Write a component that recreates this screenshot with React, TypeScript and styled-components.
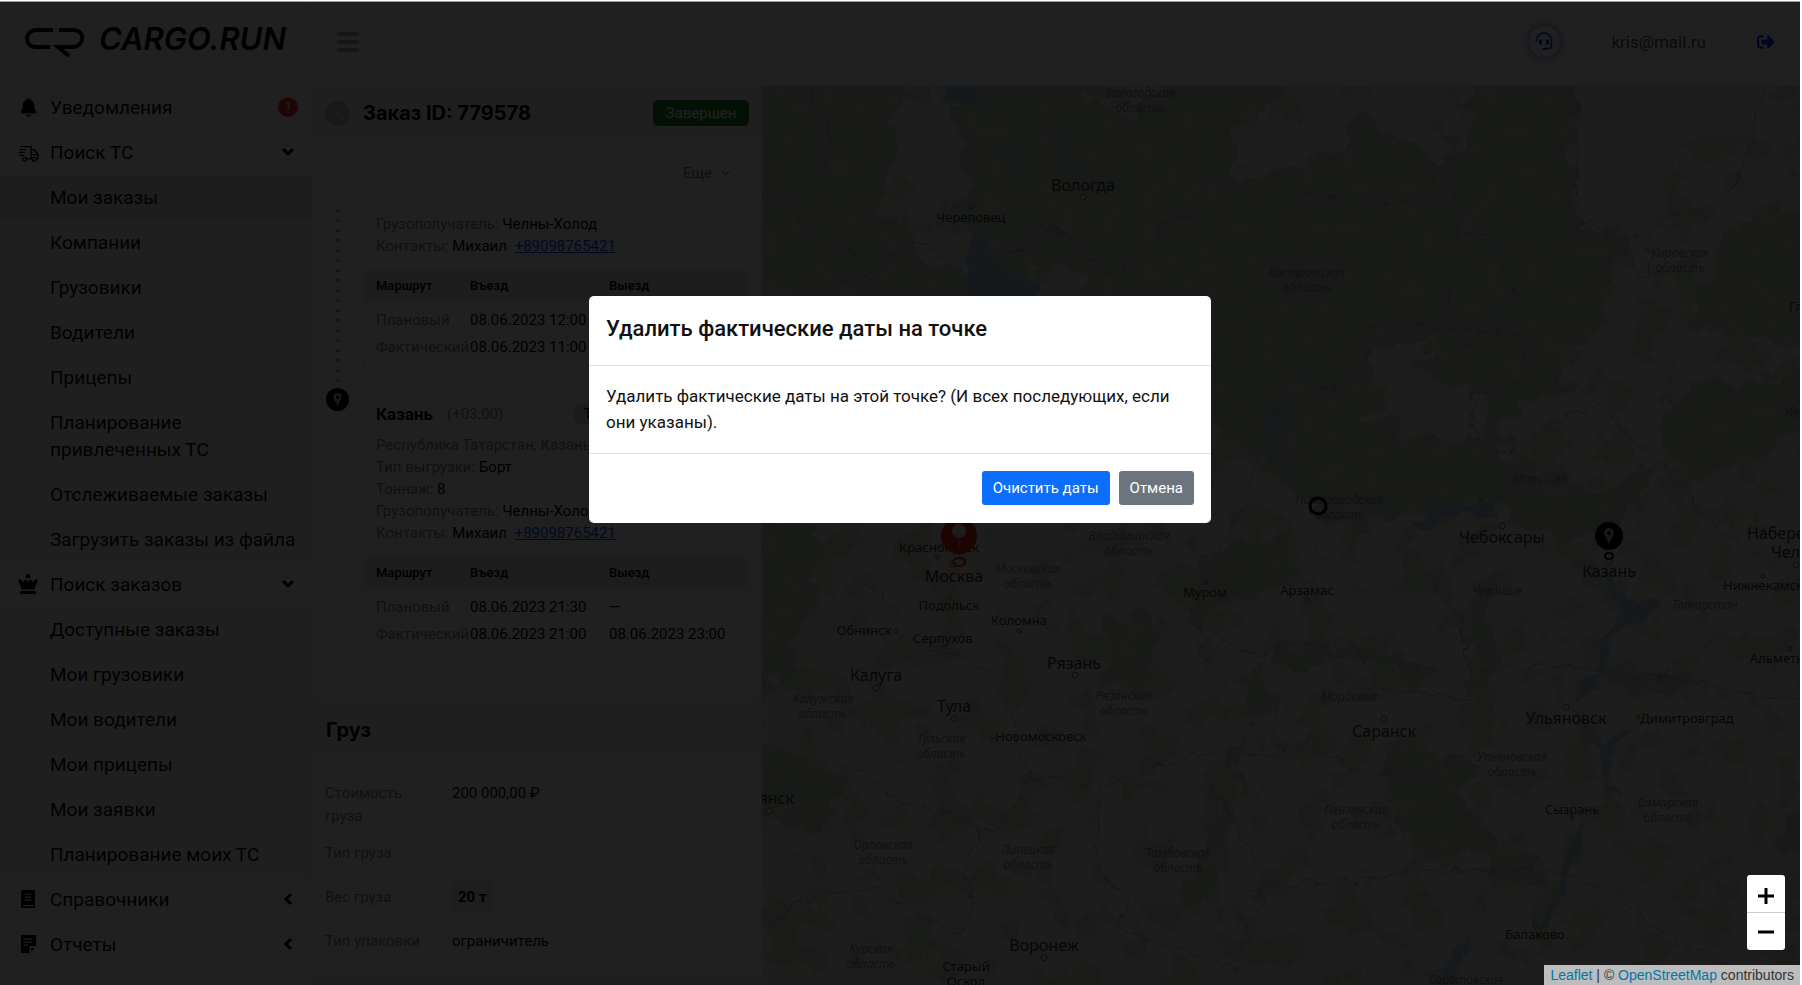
import React from "react";
import styled, { createGlobalStyle } from "styled-components";
import { IoNotifications } from "react-icons/io5";
import { FaSignOutAlt } from "react-icons/fa";

const GlobalStyle = createGlobalStyle`
  *, *::before, *::after { box-sizing: border-box; }
  body {
    margin: 0;
    background: #fff;
    color: #000;
    font-family: Roboto, "Liberation Sans", sans-serif;
    font-size: 18px;
  }
  h1, h2, h3, p, ul, dl, dd { margin: 0; padding: 0; }
  ul { list-style: none; }
  button { font-family: inherit; cursor: pointer; }
`;

/* ---------- Shell ---------- */

const Shell = styled.div`
  display: flex;
  height: 100vh;
  padding: 2px 2px 0 0;
  overflow: hidden;
`;

const Sidebar = styled.aside`
  flex: 0 0 312px;
  display: flex;
  flex-direction: column;
  border-right: 1px solid #e4e4e4;
`;

const Main = styled.div`
  flex: 1;
  min-width: 0;
  display: flex;
  flex-direction: column;
`;

const Content = styled.div`
  flex: 1;
  min-height: 0;
  display: flex;
`;

/* ---------- Sidebar ---------- */

const Brand = styled.a`
  display: flex;
  align-items: flex-start;
  gap: 14px;
  flex: 0 0 84px;
  padding: 22px 24px 0 25px;
  border-bottom: 1px solid #e4e4e4;
  color: #000;
  text-decoration: none;
`;

const BrandName = styled.span`
  font: italic 600 31px/30px Inter, sans-serif;
`;

const BrandMark = styled.svg`
  width: 60px;
  height: 34px;
`;

const MenuLink = styled.a<{ $active?: boolean }>`
  display: block;
  padding: 8px 8px 10px 50px;
  font-size: 19px;
  line-height: 27px;
  color: #0a0a0a;
  text-decoration: none;
  background: ${(p) => (p.$active ? "#e6e6e6" : "transparent")};
`;

const SubMenu = styled.ul`
  background: #f8f8f8;
`;

const GroupButton = styled.button`
  display: flex;
  align-items: center;
  width: 100%;
  height: 45px;
  padding: 0 14px 3px 18px;
  border: 0;
  background: none;
  color: #0a0a0a;
  font-size: 19px;
  text-align: left;
`;

const GroupIcon = styled.span`
  display: flex;
  width: 32px;
`;

const GroupLabel = styled.span`
  flex: 1;
`;

const CountBadge = styled.span`
  width: 20px;
  height: 20px;
  border-radius: 50%;
  background: #ee3545;
  color: #fff;
  font-size: 11px;
  line-height: 20px;
  text-align: center;
  margin-right: -1px;
`;

const Chevron = styled.svg<{ $left?: boolean }>`
  width: 18px;
  height: 18px;
  fill: none;
  stroke: #000;
  stroke-width: 3;
  transform: ${(p) => (p.$left ? "rotate(90deg)" : "none")};
`;

/* ---------- Top bar ---------- */

const TopBar = styled.header`
  flex: 0 0 84px;
  display: flex;
  align-items: center;
  padding: 0 25px 4px 22px;
  border-bottom: 1px solid #e4e4e4;
`;

const Burger = styled.button`
  display: flex;
  flex-direction: column;
  gap: 4px;
  padding: 3px;
  border: 0;
  background: none;
  margin-right: auto;
`;

const BurgerBar = styled.span`
  width: 22px;
  height: 4px;
  background: #b4b4b4;
`;

const SupportButton = styled.button`
  display: grid;
  place-items: center;
  width: 31px;
  height: 31px;
  padding: 0;
  border: 0;
  border-radius: 50%;
  background: #fff;
  box-shadow: 0 0 10px #4a5cff;
  color: #0a3cff;
`;

const UserMail = styled.span`
  margin: 0 51px;
  color: #555;
  font-size: 17px;
`;

const LogoutLink = styled.a`
  display: flex;
  color: #0a3cff;
  font-size: 18px;
`;

/* ---------- Order panel ---------- */

const Panel = styled.section`
  flex: 0 0 450px;
  display: flex;
  flex-direction: column;
  overflow: hidden;
  background: #f6f6f6;
  border-right: 1px solid #ececec;
`;

const PanelHead = styled.div`
  display: flex;
  align-items: center;
  flex: 0 0 54px;
  padding: 0 12px 0 13px;
`;

const CloseButton = styled.button`
  display: grid;
  place-items: center;
  width: 25px;
  height: 25px;
  padding: 0;
  border: 0;
  border-radius: 50%;
  background: #c4c4c4;
  color: #fff;
`;

const PanelTitle = styled.h1`
  flex: 1;
  margin-left: 13px;
  font: 700 20px/26px Inter, sans-serif;
`;

const StatusTag = styled.span`
  width: 96px;
  border-radius: 5px;
  background: #1f8a2e;
  color: #fff;
  font-size: 15px;
  line-height: 26px;
  text-align: center;
`;

const Actions = styled.div`
  display: flex;
  justify-content: flex-end;
  align-items: center;
  flex: 0 0 67px;
  padding: 0 31px 1px 0;
  background: #fff;
`;

const MoreButton = styled.button`
  display: flex;
  align-items: center;
  gap: 9px;
  padding: 0;
  border: 0;
  background: none;
  color: #707070;
  font-size: 15px;
`;

const Route = styled.div`
  flex: none;
  padding: 0 12px 37px 0;
  background: #fff;
  border-radius: 0 0 12px 12px;
`;

const Stop = styled.article`
  display: grid;
  grid-template-columns: 51px 1fr;
`;

const Rail = styled.div`
  background: radial-gradient(circle at 50% 35%, #aaa 2px, transparent 2px) 50% 0 / 8px 10px;
  background-repeat: no-repeat round;
`;

const RailPoint = styled.div`
  display: flex;
  justify-content: center;
`;

const PointBadge = styled.span`
  display: grid;
  place-items: center;
  width: 23px;
  height: 23px;
  margin-top: 1px;
  border-radius: 50%;
  background: #000;
`;

const StopCard = styled.div<{ $continued?: boolean }>`
  border: 1px solid #e2e2e2;
  border-top-width: ${(p) => (p.$continued ? 0 : 1)}px;
  border-radius: ${(p) => (p.$continued ? "0 0 10px 10px" : "10px")};
  margin-bottom: ${(p) => (p.$continued ? 14 : 0)}px;
  background: #fdfdfd;
  font-size: 15px;
  overflow: hidden;
`;

const StopInfo = styled.div<{ $continued?: boolean }>`
  padding: ${(p) => (p.$continued ? 6 : 12)}px 12px 13px;
  line-height: 22px;
`;

const StopHead = styled.div`
  display: flex;
  align-items: center;
  gap: 14px;
  height: 28px;
  margin-bottom: 6px;
`;

const StopName = styled.h3`
  font-size: 17px;
  font-weight: 700;
`;

const Muted = styled.span`
  color: #808080;
`;

const StopType = styled.span`
  margin-left: auto;
  padding: 0 10px;
  border-radius: 12px;
  background: #d8d8d8;
`;

const Phone = styled.a`
  margin-left: 4px;
  color: #0d50fd;
`;

const Times = styled.table`
  width: 100%;
  border-collapse: collapse;
  table-layout: fixed;
  white-space: nowrap;
  margin-bottom: 12px;

  th, td {
    padding: 0;
    text-align: left;
    height: 27px;
    font-weight: 400;
  }
  thead th {
    height: 31px;
    background: #e2e2e2;
    font-size: 13px;
    font-weight: 500;
  }
  th:first-child {
    width: 106px;
    padding-left: 12px;
  }
  th:nth-child(2) { width: 139px; }
  tbody th { color: #808080; }
  tbody tr:first-child th, tbody tr:first-child td {
    height: 32px;
    padding-top: 5px;
  }
  tbody tr:first-child th { padding-left: 12px; }
`;

const SectionTitle = styled.h2`
  flex: 0 0 59px;
  padding: 20px 14px 0;
  font: 700 20px/26px Inter, sans-serif;
`;

const Details = styled.dl`
  flex: none;
  padding: 26px 13px 13px;
  border-radius: 12px 12px 0 0;
  background: #fff;
  font-size: 15px;
  line-height: 23px;
`;

const DetailRow = styled.div`
  display: grid;
  grid-template-columns: 100px 1fr;
  column-gap: 27px;
  align-items: center;
  min-height: 44px;

  &:first-child {
    align-items: start;
    min-height: 49px;
  }
  dt { color: #808080; }
`;

const Chip = styled.strong`
  display: inline-block;
  padding: 0 6px;
  border-radius: 3px;
  background: #ececec;
  line-height: 34px;
`;

/* ---------- Map ---------- */

const MapArea = styled.section`
  position: relative;
  flex: 1;
  min-width: 0;
  overflow: hidden;
  background: #eae7e2;
`;

const MapDrawing = styled.svg`
  display: block;
  width: 100%;
  height: 100%;
  font-family: "Noto Sans", "Open Sans", sans-serif;
`;

const ZoomControl = styled.div`
  position: absolute;
  right: 15px;
  bottom: 35px;
  z-index: 20;
  border-radius: 3px;
  overflow: hidden;
`;

const ZoomButton = styled.button`
  display: grid;
  place-items: center;
  width: 38px;
  height: 37px;
  padding: 0;
  border: 0;
  background: #fff;
  &:first-child {
    height: 38px;
    padding-top: 4px;
    border-bottom: 1px solid #ccc;
  }
`;

const Attribution = styled.div`
  position: absolute;
  right: 0;
  bottom: 0;
  z-index: 20;
  padding: 0 6px;
  background: #bdbdbd;
  color: #333;
  font: 14px/20px "Liberation Sans", sans-serif;
  a { color: #0078a8; text-decoration: none; }
`;

/* ---------- Dialog ---------- */

const Backdrop = styled.div`
  position: fixed;
  inset: 1px 2px 0 0;
  z-index: 10;
  border-top: 1px solid #9a9e9e;
  background: rgba(0, 0, 0, 0.875);
`;

const DialogLayer = styled.div`
  position: fixed;
  inset: 0 2px 0 0;
  z-index: 30;
  display: flex;
  justify-content: center;
  align-items: flex-start;
  padding-top: 296px;
  pointer-events: none;
`;

const Dialog = styled.div`
  width: 622px;
  border-radius: 5px;
  background: #fff;
  color: #111;
  pointer-events: auto;
`;

const DialogTitle = styled.h2`
  padding: 17px 17px 20px;
  border-bottom: 1px solid #dee2e6;
  font-size: 22px;
  font-weight: 500;
  line-height: 32px;
`;

const DialogText = styled.p`
  padding: 17px 17px 18px;
  font-size: 17px;
  line-height: 26px;
`;

const DialogFoot = styled.div`
  display: flex;
  justify-content: flex-end;
  gap: 9px;
  padding: 17px 17px 18px;
  border-top: 1px solid #dee2e6;
`;

const ActionButton = styled.button<{ $tone: string }>`
  height: 34px;
  padding: 0 11px;
  border: 0;
  border-radius: 3px;
  background: ${(p) => p.$tone};
  color: #fff;
  font-size: 15px;
`;

/* ---------- Icons ---------- */

const ChevronIcon = ({ left }: { left?: boolean }) => (
  <Chevron $left={left} viewBox="0 0 18 18" aria-hidden>
    <path d="M4 6l5 5 5-5" />
  </Chevron>
);

const TruckIcon = () => (
  <svg width="21" height="21" viewBox="0 0 20 20" fill="none" stroke="#000" strokeWidth="1.200" aria-hidden>
    <path d="M2.500 4.500H12.500V15.500M12.500 7.500h3.200l3.300 4v4.500h-1.800M8.500 16h4.700M12.500 12H19" />
    <path d="M1.500 7.200h6M.5 10h6M1.500 12.800h4" />
    <circle cx="6.500" cy="16.500" r="1.800" />
    <circle cx="15.300" cy="16.500" r="1.800" />
  </svg>
);

const BasketIcon = () => (
  <svg width="20" height="20" viewBox="0 0 20 20" aria-hidden>
    <circle cx="10" cy="2.200" r="2.200" />
    <path d="M0 5.400l3 .4 2 2.400 2.200-3 2.800 2.600 2.800-2.600 2.200 3 2-2.400 3-.4-3.600 10.200H3.600z" />
    <rect x="2" y="17" width="16" height="3" rx="1" />
  </svg>
);

const BookIcon = () => (
  <svg width="20" height="20" viewBox="0 0 20 20" aria-hidden>
    <path
      fillRule="evenodd"
      d="M5 1h12v18H5.500A2.500 2.500 0 0 1 3 16.500V3a2 2 0 0 1 2-2zM7 4.500v1.200h6V4.500zm0 3v1.200h6V7.500zm0 3v1.200h6v-1.200zM5 16v1.200h10.500V16z"
    />
  </svg>
);

const NoteIcon = () => (
  <svg width="20" height="20" viewBox="0 0 20 20" aria-hidden>
    <path
      fillRule="evenodd"
      d="M3 1h15v11h-6.500v7H3zM5.500 4.500v1.200h9V4.500zm0 3v1.200h9V7.500zm0 3v1.200H10v-1.200z"
    />
    <path d="M13 14h3.500L13.500 17.500z" />
  </svg>
);

const HeadsetIcon = () => (
  <svg width="19" height="19" viewBox="0 0 19 19" fill="none" stroke="currentColor" aria-hidden>
    <path strokeWidth="1.600" d="M1.500 10V8.500a7.500 7.500 0 0 1 15 0V14a2.500 2.500 0 0 1-2.500 2.500h-4" />
    <path strokeWidth="3" d="M5.500 7.500v5M12.500 7.500v5" />
    <path strokeWidth="2" strokeLinecap="round" d="M8.500 17h3" />
  </svg>
);

const PinGlyph = ({ size }: { size: number }) => (
  <svg width={size} height={size} viewBox="0 0 14 14" aria-hidden>
    <path
      fill="#bbb"
      fillRule="evenodd"
      d="M7 0a4.300 4.300 0 0 0-4.300 4.300C2.700 7 5.500 9 7 14c1.500-5 4.300-7 4.300-9.700A4.300 4.300 0 0 0 7 0zm0 2.700a1.700 1.700 0 1 1 0 3.400 1.700 1.700 0 0 1 0-3.400z"
    />
  </svg>
);

/* ---------- Map data ---------- */

type City = [string, number, number, number, ("start" | "middle" | "end")?];

const cities: City[] = [
  ["Вологда", 1083, 186, 16],
  ["Череповец", 971, 217, 13],
  ["Москва", 954, 577, 16],
  ["Красногорск", 939, 547, 13],
  ["Подольск", 949, 605, 13],
  ["Обнинск", 864, 630, 13],
  ["Коломна", 1019, 620, 13],
  ["Серпухов", 943, 638, 13],
  ["Калуга", 876, 676, 16],
  ["Тула", 954, 707, 16],
  ["Рязань", 1074, 664, 16],
  ["Новомосковск", 1041, 736, 13],
  ["Муром", 1205, 592, 13],
  ["Арзамас", 1307, 590, 13],
  ["Воронеж", 1044, 946, 16],
  ["Старый", 966, 966, 13],
  ["Оскол", 966, 981, 13],
  ["Брянск", 794, 799, 16, "end"],
  ["Саранск", 1384, 732, 16],
  ["Чебоксары", 1502, 538, 16],
  ["Казань", 1609, 572, 16],
  ["Ульяновск", 1566, 719, 16],
  ["Димитровград", 1687, 718, 13],
  ["Сызрань", 1572, 809, 13],
  ["Балаково", 1535, 934, 13],
  ["Нижнекамск", 1723, 585, 13, "start"],
  ["Набережные", 1747, 534, 16, "start"],
  ["Челны", 1771, 553, 16, "start"],
  ["Альметьевск", 1750, 658, 13, "start"],
  ["Глазов", 1789, 306, 13, "start"],
];

const towns: [number, number, number][] = [
  [1083, 197, 3], [971, 207, 2], [953, 564, 3], [950, 597, 2], [896, 631, 2], [1019, 631, 2],
  [943, 648, 2], [876, 688, 3], [954, 719, 3], [1075, 675, 3], [992, 737, 2], [1206, 582, 2],
  [1307, 599, 2], [1044, 958, 3], [769, 811, 3], [1384, 719, 3], [1502, 526, 3], [1609, 562, 3],
  [1566, 707, 3], [1638, 717, 2], [1572, 818, 2], [1535, 926, 2], [1763, 576, 2], [1796, 565, 3],
  [1790, 649, 2], [937, 557, 2],
];

const regions: [string, number, number][] = [
  ["Вологодская область", 1140, 93],
  ["Костромская область", 1307, 273],
  ["Кировская область", 1680, 253],
  ["Нижегородская область", 1339, 500],
  ["Марий_Эл", 1540, 479],
  ["Чувашия", 1497, 591],
  ["Татарстан", 1705, 605],
  ["Мордовия", 1349, 697],
  ["Ульяновская область", 1512, 757],
  ["Самарская область", 1668, 803],
  ["Пензенская область", 1356, 810],
  ["Саратовская область", 1466, 980],
  ["Владимирская область", 1129, 536],
  ["Московская область", 1028, 569],
  ["Рязанская область", 1124, 696],
  ["Калужская область", 823, 699],
  ["Тульская область", 941, 739],
  ["Орловская область", 883, 845],
  ["Липецкая область", 1028, 850],
  ["Тамбовская область", 1178, 853],
  ["Курская область", 871, 949],
  ["Удмуртия", 1813, 413],
];

const forests = [
  "M740 60H900L900 160 880 200 935 260 1000 290 1060 330 1060 470 740 470z",
  "M935 110L980 60H1060L1130 120 1190 60H1290L1272 105 1240 130 1230 175 1250 180 1300 160 1352 158V110L1400 130 1450 170 1470 60H1580L1578 225 1632 240 1600 320 1560 360 1580 390 1520 400 1500 440 1450 480 1400 520 1330 530 1270 470 1220 440 1100 300 1060 260 1000 290 960 220 960 160z",
  "M1740 220L1820 202V350L1700 330 1690 300z",
  "M1660 400L1820 360V430L1740 460 1680 470 1668 440z",
  "M1430 450L1500 440 1530 470 1600 490 1660 460 1640 500 1570 540 1470 500 1430 520 1410 490z",
  "M1465 590L1492 585 1500 650 1480 692 1470 680z",
  "M1200 560L1290 530 1300 570 1250 600 1215 610 1200 650 1190 600z",
  "M1100 620L1150 610 1160 690 1110 680z",
  "M1240 680L1265 660 1275 720 1250 720z",
  "M1232 740L1240 735 1235 790 1200 920 1185 910 1210 830z",
  "M740 520L820 530 810 600 790 680 740 700z",
  "M740 730L800 760 850 780 820 830 740 815z",
  "M1270 650L1350 640 1440 665 1430 675 1340 660 1280 675z",
  "M1390 760L1440 750 1480 770 1460 790 1500 850 1420 860 1395 820z",
  "M1500 840L1560 870 1550 890 1490 880z",
  "M1600 660L1690 670 1670 700 1620 690z",
  "M1780 820L1820 810V850L1790 860z",
];

const clearings = [
  "M1350 60H1422L1430 110 1470 112 1475 122 1440 125 1400 122z",
  "M1574 60H1765L1735 115 1675 135 1640 215 1578 222z",
  "M1245 140L1300 110 1345 120V158L1250 172z",
  "M1380 340L1430 345 1420 370 1490 390 1480 440 1410 430 1370 420z",
  "M890 120L940 100 970 140 960 210 905 180z",
];

const waters = [
  "M938 80H981V104H945z",
  "M970 250L980 225 997 262 1035 282 1035 310H960z",
  "M1043 130L1067 150 1081 170 1073 168z",
  "M1001 145L1017 150 1009 162z",
  "M1267 415L1282 410 1277 440 1285 460 1288 473 1280 474 1277 450 1265 430z",
  "M1450 505L1483 498 1497 518 1485 520 1470 508 1435 525 1405 528z",
  "M1605 560L1617 590 1630 600 1660 598 1655 612 1615 632 1605 660 1599 675 1600 692 1575 702 1573 680 1597 674 1601 640 1623 612 1609 585z",
  "M1571 706L1590 727 1605 745 1633 725 1610 758 1609 785 1621 795 1609 797 1601 775 1600 750z",
  "M1580 817L1583 845 1567 880 1560 905 1545 925 1535 935 1550 905 1565 860z",
  "M1447 970L1455 948 1475 945 1460 955 1453 985z",
];

const borders =
  "M810 86L815 110 830 125 825 160 815 185 795 205 762 200 M790 210L815 240 850 250 870 270 M820 300L850 280 880 270 905 240 930 245 955 275 975 250 1002 252 1027 250 1035 228 1070 235 1090 262 1110 272 1145 260 1160 225 1200 210 1205 175 1225 185 1240 188 1260 198 1290 190 1330 198 1380 205 1430 202 1435 160 1453 158 1455 233 1490 235 1500 260 1520 300 1460 350 M1450 290V328L1370 325 1362 365 1330 390 1290 380 1280 400 1260 445 1245 500 1225 540 1206 582 M1450 328L1530 335 1520 380 1470 395 1475 440 1505 455 1540 430 1570 415 1605 405 1620 430 1660 460 1680 485 1710 520 1740 545 M1573 86L1575 222 1608 230 1605 245 1632 258 1635 278 1648 278 1650 230 1670 215 1710 205 1740 180 1765 86 M860 580L900 615 920 650 960 655 1000 680 1030 780 1050 775 1095 790 1130 775 1200 755 1270 755 1310 740 1350 770 1440 775 1480 730 M860 770L900 805 950 810 980 830 1000 830 1030 780 M980 830L965 870 975 910 960 935 880 890 810 890 770 930 M1205 780L1240 830 1273 885 1250 925 1230 985 M1100 800L1095 860 1125 900 1120 930 1170 945 1240 970 M1210 660L1220 640 1260 655 1300 640 1360 650 1380 690 1470 700 M1240 890L1350 880 1440 870 1530 870 1600 885 1660 930 1720 960 1740 985 M1440 560L1435 590 1460 620 1470 670 1560 665 1620 675 1690 680 1730 690 1802 700";

const roads =
  "M762 620L840 590 940 565 1060 550 1210 540 1300 545 1420 535 1560 550 1610 570 1740 575 1802 530 M940 570L900 640 876 690 810 760 M950 570L945 700 975 760 985 880 1044 958 1070 985 M762 355L860 200 1080 197 1120 140 1230 120 M970 560L1075 675 1200 740 1390 840 1560 820 1680 790 1760 850 M1320 520L1310 600 1385 720 M1630 86L1605 280 1640 400 1590 430 1540 420 1560 540 M762 815L880 960 1044 958 1200 985";

const RussiaMap = () => (
  <MapDrawing viewBox="762 86 1038 899" preserveAspectRatio="xMinYMin slice" role="img" aria-label="Карта маршрута">
    <defs>
      <filter id="rough" x="-5%" y="-5%" width="110%" height="110%">
        <feTurbulence type="fractalNoise" baseFrequency="0.035" numOctaves="4" seed="4" />
        <feDisplacementMap in="SourceGraphic" scale="46" xChannelSelector="R" yChannelSelector="G" />
      </filter>
      <filter id="wobble" x="-5%" y="-5%" width="110%" height="110%">
        <feTurbulence type="fractalNoise" baseFrequency="0.06" numOctaves="3" seed="9" />
        <feDisplacementMap in="SourceGraphic" scale="16" xChannelSelector="R" yChannelSelector="G" />
      </filter>
      {/* Scattered woodland and fields: noise thresholded into small patches */}
      <filter id="woods" x="0" y="0" width="100%" height="100%" colorInterpolationFilters="sRGB">
        <feTurbulence type="fractalNoise" baseFrequency="0.03" numOctaves="5" seed="12" />
        <feColorMatrix values="0 0 0 0 0.7  0 0 0 0 0.8  0 0 0 0 0.69  12 0 0 0 -6.4" />
      </filter>
      <filter id="fields" x="0" y="0" width="100%" height="100%" colorInterpolationFilters="sRGB">
        <feTurbulence type="fractalNoise" baseFrequency="0.05" numOctaves="5" seed="31" />
        <feColorMatrix values="0 0 0 0 0.89  0 0 0 0 0.89  0 0 0 0 0.84  12 0 0 0 -6.6" />
      </filter>
    </defs>
    <rect x="762" y="86" width="1038" height="899" filter="url(#woods)" opacity="0.6" />
    <g filter="url(#rough)">
      {forests.map((d) => <path key={d} d={d} fill="#b3cab0" />)}
      {clearings.map((d) => <path key={d} d={d} fill="#e8e8e4" />)}
    </g>
    <rect x="762" y="86" width="1038" height="899" filter="url(#fields)" opacity="0.5" />
    <g filter="url(#wobble)" fill="none">
      <path d={roads} stroke="#e2c2b8" strokeWidth="1" />
      <path d={borders} stroke="#a89bb0" strokeWidth="1" />
      {waters.map((d) => <path key={d} d={d} fill="#a9c8da" />)}
    </g>
    <g fill="#e8e4e0" stroke="#666" strokeWidth="1">
      {towns.map(([x, y, r]) => <circle key={`${x}-${y}`} cx={x} cy={y} r={r} />)}
    </g>
    <g fill="#8d7796" fontSize="12" fontStyle="italic" textAnchor="middle">
      {regions.map(([name, x, y]) => (
        <text key={name} x={x} y={y + 4}>
          {name.split(" ").map((part, i) => (
            <tspan key={part} x={x} dy={i * 15}>{part.replace("_", " ")}</tspan>
          ))}
        </text>
      ))}
    </g>
    <g fill="#333">
      {cities.map(([name, x, y, size, anchor = "middle"]) => (
        <text key={name} x={x} y={y + 5} fontSize={size} textAnchor={anchor}>{name}</text>
      ))}
    </g>
    <circle cx="1318" cy="506" r="8" fill="none" stroke="#000" strokeWidth="3" />
    <circle cx="959" cy="536" r="18" fill="#d4200a" />
    <circle cx="959" cy="531" r="7" fill="#e8e0dc" />
    <path d="M959 536v12" stroke="#d8b0a8" strokeWidth="1" />
    <ellipse cx="959" cy="562" rx="6" ry="4" fill="none" stroke="#d4200a" strokeWidth="2" />
    <circle cx="1609" cy="536" r="14" fill="#000" />
    <g transform="translate(1601 528)"><PinGlyph size={16} /></g>
    <ellipse cx="1609" cy="556" rx="4" ry="3" fill="none" stroke="#000" strokeWidth="2" />
  </MapDrawing>
);

/* ---------- Sections ---------- */

const searchLinks = [
  "Мои заказы",
  "Компании",
  "Грузовики",
  "Водители",
  "Прицепы",
  "Планирование привлеченных ТС",
  "Отслеживаемые заказы",
  "Загрузить заказы из файла",
];

const orderLinks = [
  "Доступные заказы",
  "Мои грузовики",
  "Мои водители",
  "Мои прицепы",
  "Мои заявки",
  "Планирование моих ТС",
];

const Links = ({ items, active }: { items: string[]; active?: string }) => (
  <SubMenu>
    {items.map((item) => (
      <li key={item}>
        <MenuLink href="#" $active={item === active}>{item}</MenuLink>
      </li>
    ))}
  </SubMenu>
);

const Group = ({ icon, label, children }: { icon: React.ReactNode; label: string; children: React.ReactNode }) => (
  <GroupButton type="button">
    <GroupIcon>{icon}</GroupIcon>
    <GroupLabel>{label}</GroupLabel>
    {children}
  </GroupButton>
);

const RouteTimes = ({ rows }: { rows: string[][] }) => (
  <Times>
    <thead>
      <tr>
        <th scope="col">Маршрут</th>
        <th scope="col">Въезд</th>
        <th scope="col">Выезд</th>
      </tr>
    </thead>
    <tbody>
      {rows.map(([name, arrival, departure]) => (
        <tr key={name}>
          <th scope="row">{name}</th>
          <td>{arrival}</td>
          <td>{departure}</td>
        </tr>
      ))}
    </tbody>
  </Times>
);

const Receiver = () => (
  <>
    <div><Muted>Грузополучатель:</Muted> Челны-Холод</div>
    <div><Muted>Контакты:</Muted> Михаил <Phone href="tel:+89098765421">+89098765421</Phone></div>
  </>
);

export default function App() {
  return (
    <>
      <GlobalStyle />
      <Shell>
        <Sidebar>
          <Brand href="#">
            <BrandMark viewBox="0 0 60 34" fill="none" stroke="#000" strokeWidth="4" aria-hidden>
              <path d="M28 6H12C-1 6-1 23 11 23h14" />
              <path d="M34 6h14c13 0 12 17-1 17H33l11 9" />
            </BrandMark>
            <BrandName>CARGO.RUN</BrandName>
          </Brand>
          <nav>
            <Group icon={<IoNotifications size={21} />} label="Уведомления"><CountBadge>1</CountBadge></Group>
            <Group icon={<TruckIcon />} label="Поиск ТС"><ChevronIcon /></Group>
            <Links items={searchLinks} active="Мои заказы" />
            <Group icon={<BasketIcon />} label="Поиск заказов"><ChevronIcon /></Group>
            <Links items={orderLinks} />
            <Group icon={<BookIcon />} label="Справочники"><ChevronIcon left /></Group>
            <Group icon={<NoteIcon />} label="Отчеты"><ChevronIcon left /></Group>
          </nav>
        </Sidebar>

        <Main>
          <TopBar>
            <Burger type="button" aria-label="Меню"><BurgerBar /><BurgerBar /><BurgerBar /></Burger>
            <SupportButton type="button" aria-label="Поддержка"><HeadsetIcon /></SupportButton>
            <UserMail>kris@mail.ru</UserMail>
            <LogoutLink href="#" aria-label="Выйти"><FaSignOutAlt /></LogoutLink>
          </TopBar>

          <Content>
            <Panel>
              <PanelHead>
                <CloseButton type="button" aria-label="Закрыть">
                  <svg width="11" height="11" viewBox="0 0 11 11" stroke="currentColor" aria-hidden>
                    <path d="M0 0l11 11M11 0L0 11" />
                  </svg>
                </CloseButton>
                <PanelTitle>Заказ ID: 779578</PanelTitle>
                <StatusTag>Завершен</StatusTag>
              </PanelHead>
              <Actions>
                <MoreButton type="button">
                  Еще
                  <svg width="9" height="6" viewBox="0 0 9 6" fill="none" stroke="#333" aria-hidden>
                    <path d="M1 1l3.500 3.500L8 1" />
                  </svg>
                </MoreButton>
              </Actions>
              <Route>
                <Stop>
                  <Rail />
                  <StopCard $continued>
                    <StopInfo $continued><Receiver /></StopInfo>
                    <RouteTimes rows={[
                      ["Плановый", "08.06.2023 12:00", "—"],
                      ["Фактический", "08.06.2023 11:00", "—"],
                    ]} />
                  </StopCard>
                </Stop>
                <Stop>
                  <RailPoint><PointBadge><PinGlyph size={13} /></PointBadge></RailPoint>
                  <StopCard>
                    <StopInfo>
                      <StopHead>
                        <StopName>Казань</StopName>
                        <Muted>(+03:00)</Muted>
                        <StopType>Точка выгрузки № 2</StopType>
                      </StopHead>
                      <div><Muted>Республика Татарстан, Казань</Muted></div>
                      <div><Muted>Тип выгрузки:</Muted> Борт</div>
                      <div><Muted>Тоннаж:</Muted> 8</div>
                      <Receiver />
                    </StopInfo>
                    <RouteTimes rows={[
                      ["Плановый", "08.06.2023 21:30", "—"],
                      ["Фактический", "08.06.2023 21:00", "08.06.2023 23:00"],
                    ]} />
                  </StopCard>
                </Stop>
              </Route>
              <SectionTitle>Груз</SectionTitle>
              <Details>
                <DetailRow><dt>Стоимость груза</dt><dd>200 000,00 ₽</dd></DetailRow>
                <DetailRow><dt>Тип груза</dt><dd /></DetailRow>
                <DetailRow><dt>Вес груза</dt><dd><Chip>20 т</Chip></dd></DetailRow>
                <DetailRow><dt>Тип упаковки</dt><dd>ограничитель</dd></DetailRow>
              </Details>
            </Panel>

            <MapArea>
              <RussiaMap />
              <ZoomControl>
                <ZoomButton type="button" aria-label="Приблизить">
                  <svg width="16" height="16" viewBox="0 0 16 16" stroke="#000" strokeWidth="3" aria-hidden>
                    <path d="M8 0v16M0 8h16" />
                  </svg>
                </ZoomButton>
                <ZoomButton type="button" aria-label="Отдалить">
                  <svg width="16" height="16" viewBox="0 0 16 16" stroke="#000" strokeWidth="3" aria-hidden>
                    <path d="M0 8h16" />
                  </svg>
                </ZoomButton>
              </ZoomControl>
              <Attribution>
                <a href="#">Leaflet</a> | © <a href="#">OpenStreetMap</a> contributors
              </Attribution>
            </MapArea>
          </Content>
        </Main>
      </Shell>

      <Backdrop />
      <DialogLayer>
        <Dialog role="dialog" aria-modal="true" aria-labelledby="dialog-title">
          <DialogTitle id="dialog-title">Удалить фактические даты на точке</DialogTitle>
          <DialogText>
            Удалить фактические даты на этой точке? (И всех последующих, если они указаны).
          </DialogText>
          <DialogFoot>
            <ActionButton type="button" $tone="#0d6efd">Очистить даты</ActionButton>
            <ActionButton type="button" $tone="#6c757d">Отмена</ActionButton>
          </DialogFoot>
        </Dialog>
      </DialogLayer>
    </>
  );
}
